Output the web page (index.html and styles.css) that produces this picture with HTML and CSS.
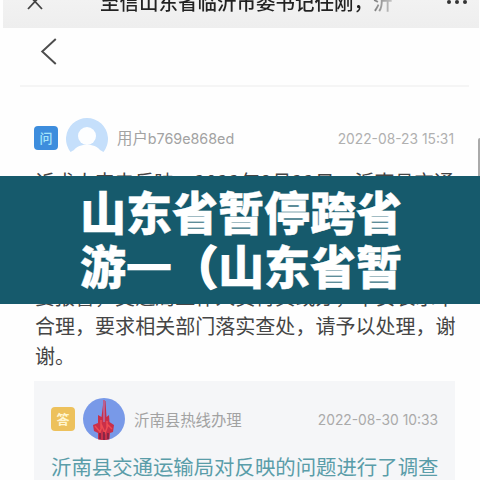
FILE: index.html
```html
<!DOCTYPE html>
<html lang="zh-CN">
<head>
<meta charset="utf-8">
<title>山东省暂停跨省游</title>
<link rel="stylesheet" href="styles.css">
</head>
<body>
<main class="page">
  <header class="topbar">
    <svg class="close" viewBox="0 0 18 18"><path d="M1.5 1.5 16 17M16.5 1.5 2 17"/></svg>
    <div class="topbar-title">至信山东省临沂市委书记任刚，沂</div>
    <svg class="more" viewBox="0 0 22 6"><circle cx="3" cy="3" r="2"/><circle cx="11" cy="3" r="2"/><circle cx="19" cy="3" r="2"/></svg>
  </header>
  <nav class="nav">
    <svg class="back" viewBox="0 0 18 30"><path d="M16 2 2 15 16 28"/></svg>
  </nav>
  <article class="post">
    <div class="meta">
      <span class="tag tag-ask">问</span>
      <svg class="avatar" viewBox="0 0 42 42"><path d="M4.5 35A21 21 0 1 1 37.5 35L34 33C29 26 13 26 8 33Z" fill="#c5dffb"/><circle cx="21" cy="19" r="9" fill="#fdfeff"/></svg>
      <span class="user">用户<span class="uid">b769e868ed</span></span>
      <time class="date">2022-08-23 15:31</time>
    </div>
    <div class="body">
      <p class="first">诉求人来电反映，<span class="num">2022</span>年<span class="num">8</span>月<span class="num">22</span>日，沂南县交通</p>
      <p class="last">要报警，交通局工作人员待其或办，不安表示不</p>
      <p>合理，要求相关部门落实查处，请予以处理，谢</p>
      <p>谢。</p>
    </div>
  </article>
  <section class="answer">
    <div class="meta">
      <span class="tag tag-reply">答</span>
      <svg class="avatar" viewBox="0 0 42 42"><circle cx="21" cy="21" r="21" fill="#7899e8"/><path d="M20.5 3 22.5 3 23.5 19 26 17 26.500 24 31 27 30 34 27 35 26.500 41.200Q21 43 15 41.200L15 35 11 33 10 27 15 25 15 17 18.500 19Z" fill="#c92f49"/><path d="M21 2V24" stroke="#b85f91" stroke-width="2"/><path d="M12 28 17 34 19 28 22 35 25 27 29 31M18 22V30M24 23V30" fill="none" stroke="#ed4b52" stroke-width="1.500"/><path d="M17 35V41M21 34V42M25 35V41" stroke="#672345" stroke-width="1.300"/></svg>
      <span class="user">沂南县热线办理</span>
      <time class="date">2022-08-30 10:33</time>
    </div>
    <p class="reply">沂南县交通运输局对反映的问题进行了调查</p>
  </section>
  <i class="scroll"></i>
  <h1 class="banner"><span class="row">山东省暂停跨省</span><span class="row">游<span class="dash">—</span><span class="paren">（</span>山东省暂</span></h1>
</main>
</body>
</html>
```
FILE: styles.css
```css
* { box-sizing: border-box; }
body, p, h1 { margin: 0; }
body {
  width: 480px;
  height: 480px;
  overflow: hidden;
  background: #fefefe;
  font-family: "Noto Sans CJK SC", sans-serif;
}
svg { display: block; flex: none; }
.page { position: relative; height: 480px; overflow: hidden; }
.topbar {
  display: flex;
  height: 28px;
  margin: 0 1px 0 3px;
  padding: 0 11px 0 23px;
  background: linear-gradient(#f2f2f2, #eee);
  overflow: hidden;
}
.close { width: 18px; height: 18px; margin-top: -8px; fill: none; stroke: #444; stroke-width: 1.8; }
.topbar-title {
  width: 298px;
  height: 30px;
  margin: -13px 0 0 56px;
  overflow: hidden;
  white-space: nowrap;
  font-size: 19.5px;
  font-weight: 500;
  line-height: 30px;
  background: linear-gradient(90deg, #222 266px, #888 276px, #ccc 294px);
  background-clip: text;
  -webkit-background-clip: text;
  color: transparent;
}
.more { width: 22px; height: 6px; margin: -1px 0 0 auto; fill: #333; }
.nav {
  height: 59px;
  margin: 0 11px 0 20px;
  padding: 9px 0 0 20px;
  border-bottom: 2px solid #f5f5f5;
}
.back { width: 18px; height: 29px; fill: none; stroke: #4d4d4d; stroke-width: 2; }
.post { height: 294px; padding: 30px 26px 0 34px; }
.meta { display: flex; align-items: center; height: 42px; }
.tag {
  width: 24px;
  height: 24px;
  border-radius: 4px;
  text-align: center;
  font-size: 13px;
  font-weight: 500;
  line-height: 23px;
}
.tag-ask { background: #3d8ddd; color: #a5e5fa; }
.tag-reply { background: #edc15c; color: #fff5cf; font-weight: 700; }
.avatar { width: 42px; height: 42px; margin-left: 8px; }
.user { margin-left: 9px; color: #a2a2a2; font-size: 15.4px; line-height: 24px; white-space: nowrap; }
.uid { font-family: Inter, sans-serif; font-size: 14.3px; }
.date { margin-left: auto; padding-top: 2px; color: #b0b0b0; font-family: Inter, sans-serif; font-size: 13.8px; line-height: 24px; white-space: nowrap; }
.body { padding: 6px 0 0 1px; color: #454545; font-size: 20.05px; line-height: 29.3px; white-space: nowrap; }
.body .first { font-size: 19.9px; padding-top: 1.5px; }
.body .last { margin-top: 86.4px; }
.num { letter-spacing: .5px; }
.answer {
  height: 110px;
  margin: 0 25px 0 34px;
  padding: 17px 17px 0;
  background: #f5f6f8;
}
.reply { color: #5a9da9; font-size: 20.4px; line-height: 30px; margin-top: 11px; white-space: nowrap; }
.answer .date { color: #aaa; }
.scroll { position: absolute; right: 0; top: 138px; width: 2px; height: 50px; border-radius: 2px 0 0 2px; background: #aaa; }
.banner {
  position: absolute;
  left: 0;
  top: 176px;
  width: 480px;
  height: 128px;
  padding: 7px 0 0 80px;
  background: #165a6c;
  color: #fff;
  font-size: 46px;
  font-weight: 900;
  line-height: 54px;
  white-space: nowrap;
  -webkit-text-stroke: .4px #fff;
}
.row { display: block; }
.dash { -webkit-text-stroke: 4px #fff; }
.paren { -webkit-text-stroke: 1.5px #fff; }
```
